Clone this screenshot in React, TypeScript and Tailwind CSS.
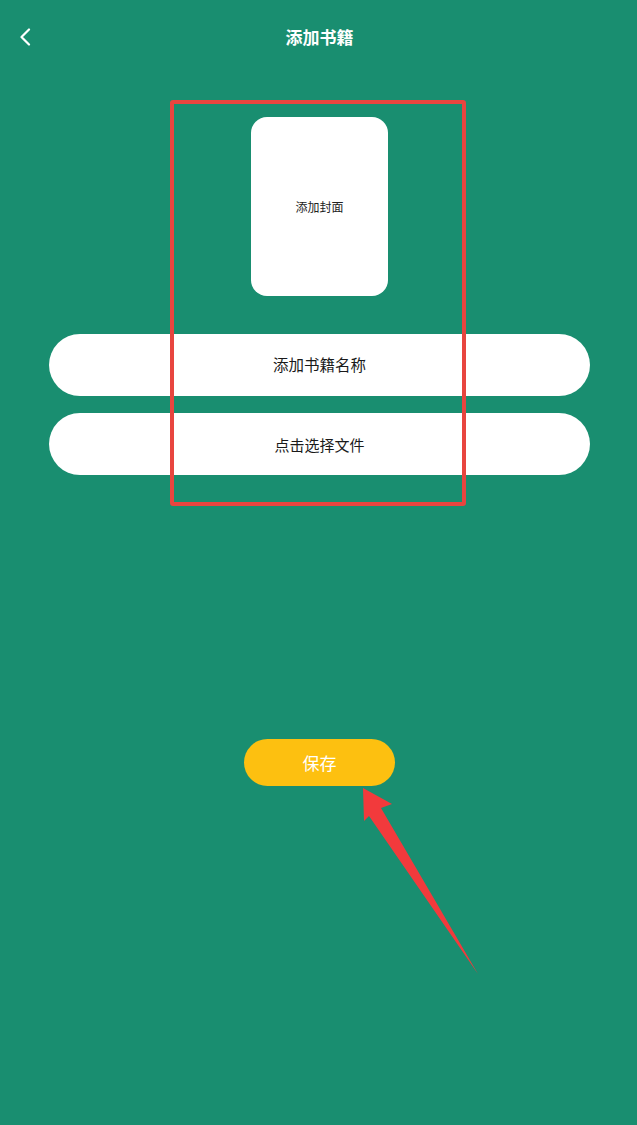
import React from "react";

export default function App() {
  return (
    <div
      className="relative w-[637px] h-[1125px] bg-[#198e70] overflow-hidden flex flex-col items-center pl-[2px]"
      style={{ fontFamily: '"Noto Sans CJK SC", "Noto Sans", sans-serif' }}
    >
      {/* Header */}
      <div className="relative w-full h-[72px] flex items-center justify-center">
        <svg
          className="absolute left-[16px] top-[28px]"
          width="16"
          height="18"
          viewBox="0 0 16 18"
          fill="none"
        >
          <path d="M11 1.5 L3.5 9 L11 16.5" stroke="white" strokeWidth="2.2" strokeLinecap="round" strokeLinejoin="round" />
        </svg>
        <span className="text-white text-[17px] font-bold leading-none">添加书籍</span>
      </div>

      {/* Cover */}
      <div className="mt-[45px] w-[137px] h-[179px] bg-white rounded-[16px] flex items-center justify-center">
        <span className="text-[12px] text-[#222] leading-none">添加封面</span>
      </div>

      {/* Inputs */}
      <div className="mt-[38px] w-[541px] flex flex-col gap-[17px]">
        <div className="h-[62px] bg-white rounded-full flex items-center justify-center">
          <span className="text-[15.5px] text-[#1a1a1a] leading-none">添加书籍名称</span>
        </div>
        <div className="h-[62px] bg-white rounded-full flex items-center justify-center">
          <span className="text-[15px] text-[#1a1a1a] leading-none">点击选择文件</span>
        </div>
      </div>

      {/* Save */}
      <div className="mt-[264px] w-[151px] h-[47px] bg-[#fdc010] rounded-full flex items-center justify-center">
        <span className="text-white text-[17px] leading-none">保存</span>
      </div>

      {/* Red annotation box */}
      <div className="absolute left-[170px] top-[100px] w-[296px] h-[406px] border-[4px] border-[#e8453f] rounded-[3px] pointer-events-none" />

      {/* Red arrow */}
      <svg className="absolute left-0 top-0 pointer-events-none" width="637" height="1125">
        <polygon
          points="363,788 392,804 381,808 478,974 369,816 364,821"
          fill="#f23a3c"
        />
      </svg>
    </div>
  );
}
